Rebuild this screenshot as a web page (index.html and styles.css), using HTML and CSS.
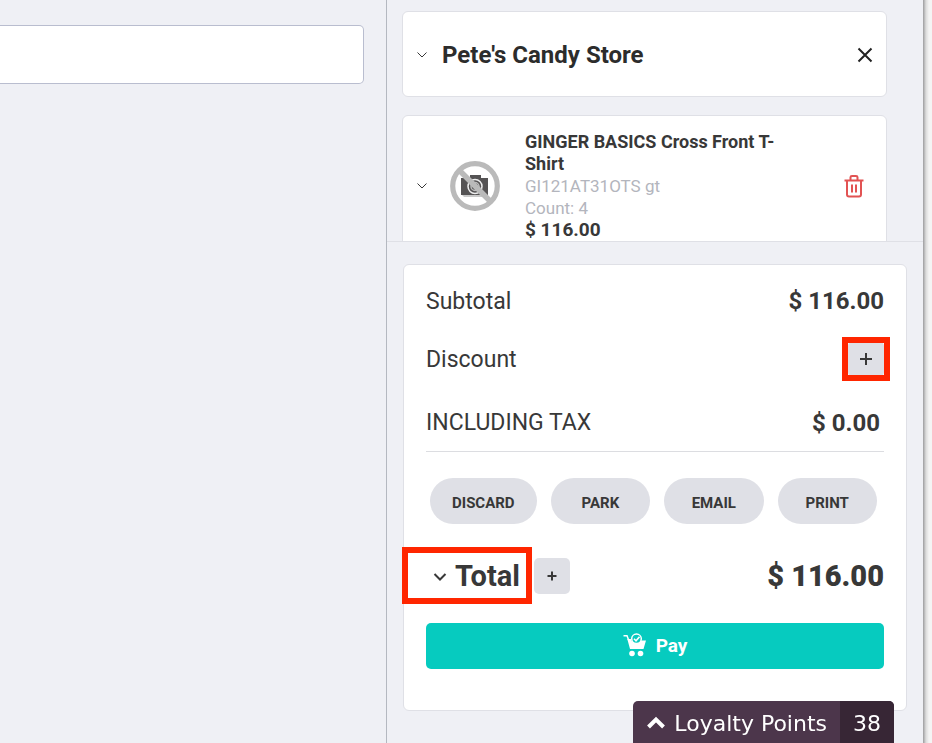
FILE: index.html
```html
<!DOCTYPE html>
<html lang="en">
<head>
<meta charset="utf-8">
<meta name="viewport" content="width=device-width, initial-scale=1">
<title>Pete's Candy Store</title>
<link rel="stylesheet" href="styles.css">
</head>
<body>
<div class="layout">
  <main class="catalog">
    <input class="search" type="search" aria-label="Search products">
  </main>
  <aside class="cart">
    <div class="cart-list">
      <section class="card store">
        <button class="icon-button chevron" aria-label="Collapse store">
          <svg width="12" height="8" viewBox="0 0 12 8"><path d="M1.500 1.500 6 6l4.500-4.500"/></svg>
        </button>
        <h1 class="store-name">Pete's Candy Store</h1>
        <button class="icon-button close" aria-label="Close">
          <svg width="16" height="16" viewBox="0 0 16 16"><path d="M1.500 1.500 14.500 14.500M14.500 1.500 1.500 14.500"/></svg>
        </button>
      </section>
      <article class="card item">
        <button class="icon-button chevron" aria-label="Expand item">
          <svg width="12" height="8" viewBox="0 0 12 8"><path d="M1.500 1.500 6 6l4.500-4.500"/></svg>
        </button>
        <svg class="no-photo" width="50" height="50" viewBox="0 0 50 50" role="img" aria-label="No photo">
          <path fill="#c9c9c9" d="M11 33h27v3H14z"/>
          <path fill="#555354" d="M11 17h9v-3h11v3h7v17H11z"/>
          <circle cx="25" cy="25.500" r="7" fill="#555354" stroke="#eee" stroke-width="1.500"/>
          <circle cx="25" cy="25.500" r="4" fill="none" stroke="#bbb" stroke-width="1.500"/>
          <path stroke="#bababa" stroke-width="5.500" d="M8 8 42 42"/>
          <circle cx="25" cy="25" r="22.300" fill="none" stroke="#bababa" stroke-width="5.200"/>
        </svg>
        <div class="item-info">
          <h2 class="item-name">GINGER BASICS Cross Front T-Shirt</h2>
          <p class="item-meta">GI121AT31OTS gt</p>
          <p class="item-meta">Count: 4</p>
          <p class="item-price">$ 116.00</p>
        </div>
        <button class="icon-button trash" aria-label="Remove item">
          <svg width="20" height="24" viewBox="0 0 20 24"><path d="M.5 6.500h19M6.500 6V3.300Q6.500 2 8 2h4q1.500 0 1.500 1.300V6M3 7v13.500Q3 22.500 5 22.500h10q2 0 2-2V7M8 10.500v8M12 10.500v8"/></svg>
        </button>
      </article>
    </div>
    <div class="checkout">
      <section class="card summary">
        <div class="row"><span>Subtotal</span><strong>$ 116.00</strong></div>
        <div class="row discount"><span>Discount</span><button class="add marked" aria-label="Add discount"><svg width="12" height="12" viewBox="0 0 12 12"><path d="M6 0v12M0 6h12"/></svg></button></div>
        <div class="row tax"><span>INCLUDING TAX</span><strong>$ 0.00</strong></div>
        <div class="actions">
          <button>DISCARD</button>
          <button>PARK</button>
          <button>EMAIL</button>
          <button>PRINT</button>
        </div>
        <div class="total">
          <button class="total-toggle marked">
            <svg width="14" height="10" viewBox="0 0 14 10"><path d="M1.500 3 7 8.500 12.500 3"/></svg>
            <span>Total</span>
          </button>
          <button class="add small" aria-label="Add to total"><svg width="10" height="10" viewBox="0 0 10 10"><path d="M5 .5v9M.5 5h9"/></svg></button>
          <strong class="total-amount">$ 116.00</strong>
        </div>
        <button class="pay">
          <svg width="24" height="24" viewBox="0 0 24 24">
            <path fill="none" stroke="#fff" stroke-width="1.500" d="M.5 2.700h3.500L6 8"/>
            <path fill="#fff" d="M4.300 6h3.500a6 6 0 0 0 10.800 1.500H23L20.500 16H7z"/>
            <circle cx="13.500" cy="5.800" r="4.800" fill="#06cbbf" stroke="#fff" stroke-width="1.500"/>
            <path fill="none" stroke="#fff" stroke-width="1.600" d="m11 5.800 2 2 3.500-4"/>
            <circle cx="9" cy="20.500" r="2.800" fill="#fff"/>
            <circle cx="17.500" cy="20.500" r="2.800" fill="#fff"/>
          </svg>
          <span>Pay</span>
        </button>
      </section>
    </div>
  </aside>
  <div class="edge"></div>
</div>
<button class="loyalty">
  <span class="loyalty-label">
    <svg width="20" height="14" viewBox="0 0 20 14"><path d="m2.500 11 7.500-7.500 7.500 7.500"/></svg>
    Loyalty Points
  </span>
  <span class="loyalty-count">38</span>
</button>
</body>
</html>
```
FILE: styles.css
```css
* {
  box-sizing: border-box;
}

body {
  margin: 0;
  background: #eff0f5;
  color: #383838;
  font-family: Roboto, "Noto Sans", sans-serif;
}

h1, h2, p {
  margin: 0;
}

button {
  padding: 0;
  border: 0;
  color: inherit;
  font-family: inherit;
  cursor: pointer;
}

svg {
  display: block;
  flex: none;
}

.layout {
  display: grid;
  grid-template-columns: minmax(0, 386fr) minmax(0, 537fr) 9px;
  height: 100vh;
}

.catalog {
  padding: 25px 22px 0 0;
}

.search {
  display: block;
  width: 100%;
  height: 59px;
  padding: 0 20px;
  border: 1px solid #b9bdcf;
  border-left: 0;
  border-radius: 0 5px 5px 0;
  background: #fff;
  font-size: 20px;
}

.cart {
  display: flex;
  flex-direction: column;
  min-height: 0;
  border-left: 1px solid #b4b8c0;
}

.edge {
  background: linear-gradient(to right, #9c9c9e, #dcdcdc 3px, #f4f4f4 6px);
}

.card {
  border: 1px solid #dfe0e6;
  border-radius: 6px;
  background: #fff;
}

.cart-list {
  display: flex;
  flex: 1;
  flex-direction: column;
  gap: 18px;
  min-height: 0;
  padding: 11px 36px 0 15px;
  overflow: hidden;
  border-bottom: 1px solid #dfe0e6;
}

.store, .item {
  display: flex;
  flex: none;
  align-items: center;
  padding: 2px 13px 0;
}

.store {
  height: 86px;
}

.icon-button {
  flex: none;
  background: none;
}

.icon-button path, .add path, .total-toggle path {
  fill: none;
  stroke: currentColor;
}

.store-name {
  flex: 1;
  margin-left: 14px;
  color: #2c2c2c;
  font-size: 24px;
  line-height: 30px;
}

.close path {
  stroke: #222;
  stroke-width: 2;
}

.item {
  padding: 15px 22px 8px 13px;
}

.no-photo {
  margin: 0 25px 0 22px;
}

.item-info {
  width: 264px;
  margin-right: auto;
  font-size: 17px;
  line-height: 22px;
}

.item-name {
  font-size: 18px;
}

.item-meta {
  color: #b3b5bd;
}

.item-price {
  font-size: 19px;
  font-weight: 700;
}

.trash {
  color: #e25353;
}

.trash path {
  stroke-width: 2;
}

.checkout {
  padding: 22px 16px 32px;
}

.summary {
  padding: 8px 22px 41px;
}

.row {
  display: flex;
  align-items: center;
  justify-content: space-between;
  height: 56px;
  font-size: 23px;
}

.row strong {
  font-size: 24px;
}

.discount {
  height: 60px;
}

.tax {
  height: 63px;
  padding: 4px 4px 0 0;
  box-shadow: inset 0 -1px #dcdde1;
}

.add {
  display: grid;
  place-items: center;
  width: 36px;
  height: 36px;
  border-radius: 5px;
  background: #dfe0e6;
}

.add path {
  stroke-width: 2;
}

.marked {
  position: relative;
}

.marked::after {
  position: absolute;
  inset: -4px -6px;
  border: 6px solid #ff2600;
  content: "";
}

.actions {
  display: flex;
  gap: 14px;
  padding: 26px 7px 0 4px;
}

.actions button {
  flex: 1 1 0;
  height: 46px;
  padding: 4px 22px 0;
  border-radius: 23px;
  background: #dfe0e6;
  font-size: 15px;
  font-weight: 700;
}

.total {
  display: flex;
  align-items: center;
  height: 36px;
  margin: 34px 0 29px;
  font-size: 29px;
  font-weight: 700;
}

.total-toggle {
  display: flex;
  align-items: center;
  gap: 8px;
  padding-left: 7px;
  background: none;
  font-size: 29px;
  font-weight: 700;
  line-height: 36px;
}

.total-toggle path {
  stroke-width: 2;
}

.total-toggle::after {
  inset: -11px -12px -10px -24px;
}

.total .add {
  margin-left: 14px;
}

.total-amount {
  margin-left: auto;
}

.pay {
  display: flex;
  align-items: center;
  justify-content: center;
  gap: 9px;
  width: 100%;
  height: 46px;
  padding-bottom: 2px;
  border-radius: 5px;
  background: #06cbbf;
  color: #fff;
  font-size: 19px;
  font-weight: 700;
}

.loyalty {
  position: fixed;
  right: 38px;
  bottom: 0;
  display: flex;
  height: 42px;
  overflow: hidden;
  border-radius: 5px 5px 0 0;
  background: #4c364b;
  color: #fff;
  font-family: "DejaVu Sans", sans-serif;
  font-size: 22px;
}

.loyalty-label, .loyalty-count {
  display: flex;
  align-items: center;
  height: 100%;
  padding: 2px 13px 0;
}

.loyalty-label {
  gap: 8px;
}

.loyalty-label path {
  fill: none;
  stroke: #fff;
  stroke-width: 4;
}

.loyalty-count {
  background: #372635;
}
```
